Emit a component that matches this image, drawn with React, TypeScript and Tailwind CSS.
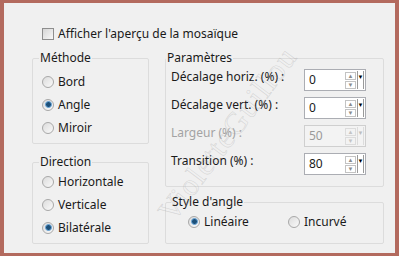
import React from 'react'

const FONT = { fontFamily: '"Noto Sans", "Open Sans", sans-serif' }

function Radio({ checked }: { checked?: boolean }) {
  return (
    <span className="flex h-[12px] w-[12px] flex-shrink-0 items-center justify-center rounded-full border border-[#a8a8a8] bg-gradient-to-br from-[#dcdcdc] to-[#fafafa]">
      {checked && (
        <span className="h-[7px] w-[7px] rounded-full border border-[#6aa8dc] bg-[#1c4f78]" />
      )}
    </span>
  )
}

function RadioRow({ label, checked }: { label: string; checked?: boolean }) {
  return (
    <div className="flex h-[23px] items-center gap-[4px] text-[#1a1a1a]">
      <Radio checked={checked} />
      <span>{label}</span>
    </div>
  )
}

function Spin({ value, disabled }: { value: string; disabled?: boolean }) {
  return (
    <div
      className={`relative flex h-[22px] w-[62px] items-stretch border ${
        disabled ? 'border-[#cfcfcf] bg-[#f3f3f3]' : 'border-[#abadb3] bg-white'
      }`}
    >
      <div className="flex flex-1 flex-col pl-[2px]">
        <span className={`flex-1 pl-[2px] leading-[19px] ${disabled ? 'text-[#9a9a9a]' : 'text-[#1a1a1a]'}`}>
          {value}
        </span>
        <span className="mb-[1px] h-[3px] w-[32px] bg-[#3d8bd3]" />
      </div>
      <div className="flex w-[11px] flex-col justify-center gap-[1px] py-[2px]">
        <span className={`flex h-[8px] items-center justify-center border text-[6px] leading-none ${disabled ? 'border-[#dcdcdc] text-[#c4c4c4]' : 'border-[#c3c3c3] text-[#8a8a8a]'}`}>▲</span>
        <span className={`flex h-[8px] items-center justify-center border text-[6px] leading-none ${disabled ? 'border-[#dcdcdc] text-[#c4c4c4]' : 'border-[#c3c3c3] text-[#8a8a8a]'}`}>▼</span>
      </div>
      <div className={`my-[1px] ml-[1px] mr-[1px] flex w-[7px] items-start justify-center border-l border-r pt-[3px] text-[6px] leading-none ${disabled ? 'border-[#dcdcdc] text-[#bdbdbd]' : 'border-[#9a9a9a] text-black'}`}>
        ▼
      </div>
    </div>
  )
}

function ParamRow({ label, value, disabled }: { label: string; value: string; disabled?: boolean }) {
  return (
    <div className="flex h-[22px] items-start justify-between">
      <span className={`leading-[16px] ${disabled ? 'text-[#a3a3a3]' : 'text-[#1a1a1a]'}`}>{label}</span>
      <Spin value={value} disabled={disabled} />
    </div>
  )
}

export default function App() {
  return (
    <div
      className="relative h-[256px] w-[399px] overflow-hidden border-b-[3px] border-l-[4px] border-r-[4px] border-t-[3px] border-[#b36a5e] bg-[#f0f0f0] text-[12px]"
      style={FONT}
    >
      {/* Aperçu */}
      <div className="ml-[38px] mt-[24px] flex h-[13px] items-center gap-[4px] text-[#1a1a1a]">
        <span className="h-[12px] w-[12px] flex-shrink-0 border border-[#8e8e8e] bg-gradient-to-br from-[#d6d6d6] to-[#f8f8f8]" />
        <span>Afficher l'aperçu de la mosaïque</span>
      </div>

      <div className="ml-[28px] mt-[10px] flex gap-[16px]">
        {/* Left column */}
        <div className="flex w-[117px] flex-col gap-[10px]">
          <fieldset className="h-[94px] rounded-[2px] border border-[#dcdcdc] pl-[9px] pt-[4px]">
            <legend className="ml-[-3px] px-[1px] leading-[16px] text-[#1a1a1a]">Méthode</legend>
            <RadioRow label="Bord" />
            <RadioRow label="Angle" checked />
            <RadioRow label="Miroir" />
          </fieldset>
          <fieldset className="h-[90px] rounded-[2px] border border-[#dcdcdc] pl-[9px]">
            <legend className="ml-[-3px] px-[1px] leading-[16px] text-[#1a1a1a]">Direction</legend>
            <RadioRow label="Horizontale" />
            <RadioRow label="Verticale" />
            <RadioRow label="Bilatérale" checked />
          </fieldset>
        </div>

        {/* Right column */}
        <div className="flex w-[219px] flex-col gap-[7px]">
          <fieldset className="h-[137px] rounded-[2px] border border-[#dcdcdc] pl-[5px] pr-[17px] pt-[3px]">
            <legend className="ml-[-5px] px-[1px] leading-[16px] text-[#1a1a1a]">Paramètres</legend>
            <div className="flex flex-col gap-[6px]">
              <ParamRow label="Décalage horiz. (%) :" value="0" />
              <ParamRow label="Décalage vert. (%) :" value="0" />
              <ParamRow label="Largeur (%) :" value="50" disabled />
              <ParamRow label="Transition (%) :" value="80" />
            </div>
          </fieldset>
          <fieldset className="h-[50px] rounded-[2px] border border-[#dcdcdc] pl-[22px]">
            <legend className="ml-[-17px] px-[1px] leading-[16px] text-[#1a1a1a]">Style d'angle</legend>
            <div className="flex">
              <div className="w-[100px]">
                <RadioRow label="Linéaire" checked />
              </div>
              <RadioRow label="Incurvé" />
            </div>
          </fieldset>
        </div>
      </div>

      {/* filigrane */}
      <div
        className="pointer-events-none absolute left-[120px] top-[108px] -rotate-[53deg] whitespace-nowrap text-[31px] tracking-[1px] text-transparent"
        style={{ fontFamily: '"Liberation Serif", serif', WebkitTextStroke: '0.6px rgba(150,150,150,0.3)' }}
      >
        VioletteGuillou
      </div>
    </div>
  )
}
